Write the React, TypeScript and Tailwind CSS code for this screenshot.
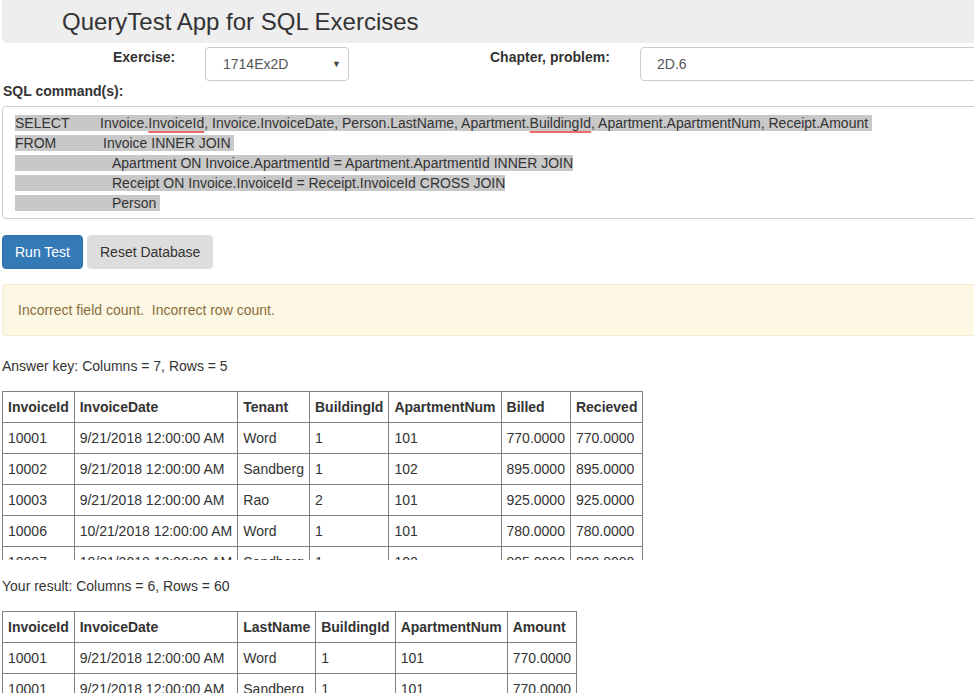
import React from 'react';

const answerCols = ['InvoiceId', 'InvoiceDate', 'Tenant', 'BuildingId', 'ApartmentNum', 'Billed', 'Recieved'];
const answerRows = [
    ['10001', '9/21/2018 12:00:00 AM', 'Word', '1', '101', '770.0000', '770.0000'],
    ['10002', '9/21/2018 12:00:00 AM', 'Sandberg', '1', '102', '895.0000', '895.0000'],
    ['10003', '9/21/2018 12:00:00 AM', 'Rao', '2', '101', '925.0000', '925.0000'],
    ['10006', '10/21/2018 12:00:00 AM', 'Word', '1', '101', '780.0000', '780.0000'],
    ['10007', '10/21/2018 12:00:00 AM', 'Sandberg', '1', '102', '895.0000', '800.0000'],
];

const resultCols = ['InvoiceId', 'InvoiceDate', 'LastName', 'BuildingId', 'ApartmentNum', 'Amount'];
const resultRows = [
    ['10001', '9/21/2018 12:00:00 AM', 'Word', '1', '101', '770.0000'],
    ['10001', '9/21/2018 12:00:00 AM', 'Sandberg', '1', '101', '770.0000'],
    ['10001', '9/21/2018 12:00:00 AM', 'Rao', '1', '101', '770.0000'],
    ['10006', '10/21/2018 12:00:00 AM', 'Word', '1', '101', '780.0000'],
    ['10006', '10/21/2018 12:00:00 AM', 'Sandberg', '1', '101', '780.0000'],
];

const DataTable: React.FC<{ cols: string[]; rows: string[][]; height: string }> = ({ cols, rows, height }) => {
    return (
        <div className={`overflow-hidden ${height}`}>
            <table className="border-collapse whitespace-nowrap">
                <thead>
                    <tr>
                        {cols.map((c) => (
                            <th key={c} className="border border-[#808080] px-[5px] py-[5px] text-left font-bold leading-[20px]">{c}</th>
                        ))}
                    </tr>
                </thead>
                <tbody>
                    {rows.map((r, i) => (
                        <tr key={i}>
                            {r.map((v, j) => (
                                <td key={j} className="border border-[#808080] px-[5px] py-[5px] leading-[20px]">{v}</td>
                            ))}
                        </tr>
                    ))}
                </tbody>
            </table>
        </div>
    );
};

const Squiggle: React.FC<{ children: React.ReactNode }> = ({ children }) => (
    <span className="underline decoration-[#ee6a6a] decoration-2 underline-offset-[3px]">{children}</span>
);

export default function App() {
    return (
        <div className="w-full h-[693px] overflow-hidden bg-white text-[14px] leading-[20px] text-[#333] font-['Liberation_Sans',Arial,sans-serif]">
            <div className="w-[1010px] pl-[2px]">
                <div className="h-[43px] bg-[#eeeeee] rounded-bl-[6px] pl-[60px] flex items-center">
                    <h1 className="text-[24px] leading-[28px] text-[#333] mt-[1px]">QueryTest App for SQL Exercises</h1>
                </div>

                <div className="flex items-start mt-[4px]">
                    <div className="w-[203px] pl-[111px] font-bold">Exercise:</div>
                    <div className="w-[144px] h-[34px] border border-[#ccc] rounded-[4px] flex items-center justify-between pl-[17px] pr-[7px] text-[#555]">
                        <span>1714Ex2D</span>
                        <span className="text-[9px] text-[#444]">▼</span>
                    </div>
                    <div className="w-[291px] pl-[141px] font-bold">Chapter, problem:</div>
                    <div className="w-[370px] h-[34px] border border-[#ccc] rounded-[4px] flex items-center pl-[16px] text-[#555]">2D.6</div>
                </div>

                <div className="font-bold pl-[1px]">SQL command(s):</div>
                <div className="mt-[5px] h-[113px] border border-[#ccc] rounded-[4px] pl-[12px] pt-[6px]">
                    <div><span className="bg-[#c8c8c8] whitespace-pre"><span className="inline-block w-[85px]">SELECT</span>Invoice.<Squiggle>InvoiceId</Squiggle>, Invoice.InvoiceDate, Person.LastName, Apartment.<Squiggle>BuildingId</Squiggle>, Apartment.ApartmentNum, Receipt.Amount </span></div>
                    <div><span className="bg-[#c8c8c8] whitespace-pre"><span className="inline-block w-[88px]">FROM</span>Invoice INNER JOIN </span></div>
                    <div><span className="bg-[#c8c8c8] whitespace-pre"><span className="inline-block w-[97px]"></span>Apartment ON Invoice.ApartmentId = Apartment.ApartmentId INNER JOIN</span></div>
                    <div><span className="bg-[#c8c8c8] whitespace-pre"><span className="inline-block w-[97px]"></span>Receipt ON Invoice.InvoiceId = Receipt.InvoiceId CROSS JOIN</span></div>
                    <div><span className="bg-[#c8c8c8] whitespace-pre"><span className="inline-block w-[97px]"></span>Person </span></div>
                </div>

                <div className="flex gap-[4px] mt-[16px]">
                    <button className="h-[34px] px-[12px] rounded-[4px] bg-[#337ab7] border border-[#2e6da4] text-white">Run Test</button>
                    <button className="h-[34px] px-[12px] rounded-[4px] bg-[#dddddd] border border-[#dddddd] text-[#333]">Reset Database</button>
                </div>

                <div className="mt-[15px] border border-[#faebcc] bg-[#fcf8e3] rounded-[4px] p-[15px] text-[#8a6d3b] whitespace-pre">
                    Incorrect field count.  Incorrect row count.
                </div>

                <div className="mt-[20px]">Answer key: Columns = 7, Rows = 5</div>
                <div className="mt-[15px]">
                    <DataTable cols={answerCols} rows={answerRows} height="h-[169px]" />
                </div>

                <div className="mt-[16px]">Your result: Columns = 6, Rows = 60</div>
                <div className="mt-[15px]">
                    <DataTable cols={resultCols} rows={resultRows} height="h-[120px]" />
                </div>
            </div>
        </div>
    );
}
